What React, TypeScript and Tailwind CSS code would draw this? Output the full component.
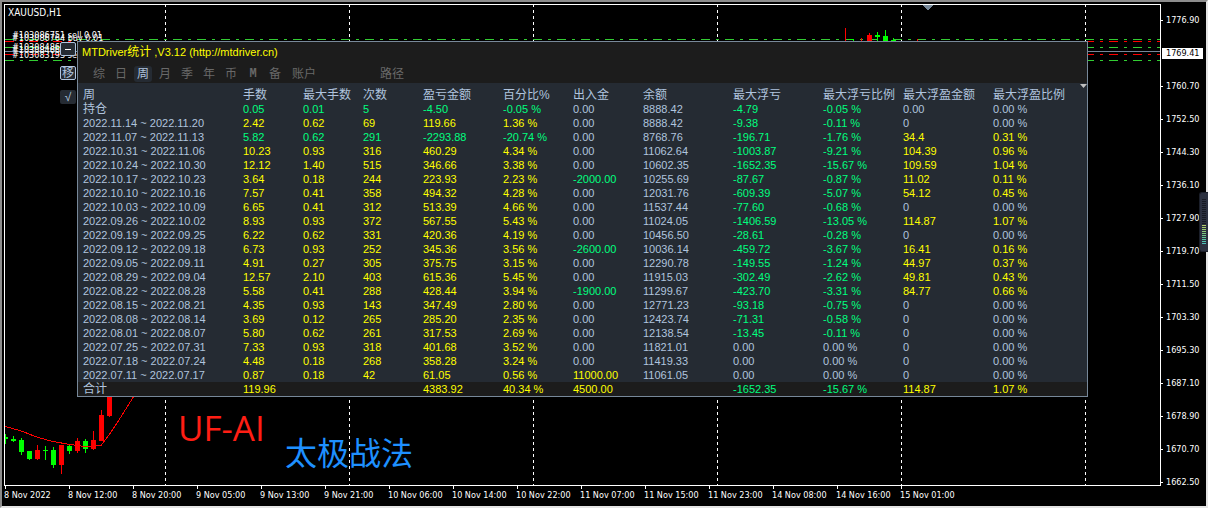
import { Fragment } from "react";

const TABS = ["综", "日", "周", "月", "季", "年", "币", "M", "备"];
const HEADERS = ["周", "手数", "最大手数", "次数", "盈亏金额", "百分比%", "出入金", "余额", "最大浮亏", "最大浮亏比例", "最大浮盈金额", "最大浮盈比例"];

const ROWS: string[][] = [
  ["持仓", "0.05", "0.01", "5", "-4.50", "-0.05", "0.00", "8888.42", "-4.79", "-0.05", "0.00", "0.00"],
  ["2022.11.14 ~ 2022.11.20", "2.42", "0.62", "69", "119.66", "1.36", "0.00", "8888.42", "-9.38", "-0.11", "0", "0.00"],
  ["2022.11.07 ~ 2022.11.13", "5.82", "0.62", "291", "-2293.88", "-20.74", "0.00", "8768.76", "-196.71", "-1.76", "34.4", "0.31"],
  ["2022.10.31 ~ 2022.11.06", "10.23", "0.93", "316", "460.29", "4.34", "0.00", "11062.64", "-1003.87", "-9.21", "104.39", "0.96"],
  ["2022.10.24 ~ 2022.10.30", "12.12", "1.40", "515", "346.66", "3.38", "0.00", "10602.35", "-1652.35", "-15.67", "109.59", "1.04"],
  ["2022.10.17 ~ 2022.10.23", "3.64", "0.18", "244", "223.93", "2.23", "-2000.00", "10255.69", "-87.67", "-0.87", "11.02", "0.11"],
  ["2022.10.10 ~ 2022.10.16", "7.57", "0.41", "358", "494.32", "4.28", "0.00", "12031.76", "-609.39", "-5.07", "54.12", "0.45"],
  ["2022.10.03 ~ 2022.10.09", "6.65", "0.41", "312", "513.39", "4.66", "0.00", "11537.44", "-77.60", "-0.68", "0", "0.00"],
  ["2022.09.26 ~ 2022.10.02", "8.93", "0.93", "372", "567.55", "5.43", "0.00", "11024.05", "-1406.59", "-13.05", "114.87", "1.07"],
  ["2022.09.19 ~ 2022.09.25", "6.22", "0.62", "331", "420.36", "4.19", "0.00", "10456.50", "-28.61", "-0.28", "0", "0.00"],
  ["2022.09.12 ~ 2022.09.18", "6.73", "0.93", "252", "345.36", "3.56", "-2600.00", "10036.14", "-459.72", "-3.67", "16.41", "0.16"],
  ["2022.09.05 ~ 2022.09.11", "4.91", "0.27", "305", "375.75", "3.15", "0.00", "12290.78", "-149.55", "-1.24", "44.97", "0.37"],
  ["2022.08.29 ~ 2022.09.04", "12.57", "2.10", "403", "615.36", "5.45", "0.00", "11915.03", "-302.49", "-2.62", "49.81", "0.43"],
  ["2022.08.22 ~ 2022.08.28", "5.58", "0.41", "288", "428.44", "3.94", "-1900.00", "11299.67", "-423.70", "-3.31", "84.77", "0.66"],
  ["2022.08.15 ~ 2022.08.21", "4.35", "0.93", "143", "347.49", "2.80", "0.00", "12771.23", "-93.18", "-0.75", "0", "0.00"],
  ["2022.08.08 ~ 2022.08.14", "3.69", "0.12", "265", "285.20", "2.35", "0.00", "12423.74", "-71.31", "-0.58", "0", "0.00"],
  ["2022.08.01 ~ 2022.08.07", "5.80", "0.62", "261", "317.53", "2.69", "0.00", "12138.54", "-13.45", "-0.11", "0", "0.00"],
  ["2022.07.25 ~ 2022.07.31", "7.33", "0.93", "318", "401.68", "3.52", "0.00", "11821.01", "0.00", "0.00", "0", "0.00"],
  ["2022.07.18 ~ 2022.07.24", "4.48", "0.18", "268", "358.28", "3.24", "0.00", "11419.33", "0.00", "0.00", "0", "0.00"],
  ["2022.07.11 ~ 2022.07.17", "0.87", "0.18", "42", "61.05", "0.56", "11000.00", "11061.05", "0.00", "0.00", "0", "0.00"],
];
const TOTAL = ["合计", "119.96", "", "", "4383.92", "40.34", "4500.00", "", "-1652.35", "-15.67", "114.87", "1.07"];

const PERCENT_COLUMNS = [5, 9, 11];

function signColor(value: string) {
  const n = parseFloat(value);
  if (!n) return "text-[#b0c4de]";
  return n < 0 ? "text-[#00ff7f]" : "text-[#ffff00]";
}

function cellColor(row: string[], col: number) {
  if (col === 0 || col === 7) return "text-[#b0c4de]";
  return signColor(col < 6 ? row[4] : row[col]);
}

function StatRow({ row, total = false }: { row: string[]; total?: boolean }) {
  const box = total ? "h-[14px] p-0 pt-px leading-[13px]" : "h-[14px] p-0 leading-[14px]";
  return (
    <tr>
      {row.map((value, i) =>
        i === 0 ? (
          <th key={i} scope="row" className={`${box} text-left font-normal text-[#b0c4de]`}>
            <span className={`block pl-[5px] ${value.length < 3 ? "text-xs" : ""} ${total ? "leading-[13px]" : "leading-[14px]"}`}>{value}</span>
          </th>
        ) : (
          <td key={i} className={`${box} ${cellColor(row, i)}`}>
            {value && PERCENT_COLUMNS.includes(i) ? `${value} %` : value}
          </td>
        ),
      )}
    </tr>
  );
}

const PRICES = ["1776.90", "1769.41", "1760.70", "1752.50", "1744.30", "1736.10", "1727.90", "1719.70", "1711.50", "1703.30", "1695.30", "1687.10", "1678.90", "1670.70", "1662.50"];
const TIMES = ["8 Nov 2022", "8 Nov 12:00", "8 Nov 20:00", "9 Nov 05:00", "9 Nov 13:00", "9 Nov 21:00", "10 Nov 06:00", "10 Nov 14:00", "10 Nov 22:00", "11 Nov 07:00", "11 Nov 15:00", "11 Nov 23:00", "14 Nov 08:00", "14 Nov 16:00", "15 Nov 01:00"];

const RED = "#ff0000";
const LIME = "#00ff00";

// x centre, body top, body bottom, wick top, wick bottom, colour
const CANDLES: [number, number, number, number, number, string][] = [
  [5, 437, 439, 434, 444, LIME],
  [13, 439, 441, 436, 442, LIME],
  [21, 440, 452, 438, 455, LIME],
  [29, 451, 459, 451, 460, LIME],
  [37, 450, 459, 445, 460, RED],
  [45, 450, 451, 446, 460, LIME],
  [53, 450, 465, 447, 468, LIME],
  [61, 445, 465, 445, 474, RED],
  [69, 446, 451, 444, 454, LIME],
  [77, 441, 451, 438, 453, RED],
  [85, 441, 449, 439, 453, LIME],
  [93, 440, 449, 431, 450, RED],
  [101, 415, 441, 410, 441, RED],
  [109, 396, 416, 396, 417, RED],
  [869, 35, 42, 33, 42, RED],
  [877, 35, 37, 32, 42, LIME],
  [885, 36, 42, 30, 42, LIME],
  [893, 40, 42, 38, 42, LIME],
];

const LEVELS: [number, string][] = [
  [39, "#32cd32"],
  [41, RED],
  [47, "#32cd32"],
  [54, RED],
  [60, "#32cd32"],
];

const ORDERS: [number, string][] = [
  [38, "#103086751 sell 0.01"],
  [41, "#103086764 buy 0.01"],
  [50, "#103084865"],
  [53, "#103084665"],
  [58, "#103083193 sell 0.01"],
];

function Chart() {
  return (
    <svg className="absolute inset-0 h-full w-full" shapeRendering="crispEdges" aria-hidden="true">
      <g transform="translate(-5 -5)">
        <defs>
          <pattern id="day" width="1" height="6" patternUnits="userSpaceOnUse" y="4">
            <rect width="1" height="3" fill="#ffffff" />
          </pattern>
        </defs>
        {[165, 349, 533, 717, 901, 1085].map((x) => (
          <rect key={x} x={x} y="4" width="1" height="110%" fill="url(#day)" />
        ))}
        {LEVELS.map(([y, color]) => (
          <line key={y} x1="5" x2="110%" y1={y + 0.5} y2={y + 0.5} stroke={color} strokeDasharray="9 6 3 6" />
        ))}
        <line x1="5" x2="110%" y1="51.5" y2="51.5" stroke="#778899" />
        {CANDLES.map(([x, top, bottom, high, low, color]) => (
          <Fragment key={x}>
            <rect x={x} y={high} width="1" height={low - high} fill={color} />
            <rect x={x - 2} y={top} width="5" height={bottom - top} fill={color} />
          </Fragment>
        ))}
        <path d="M845 28h1v14h-1zM861 38h1v4h-1zM917 39h1v3h-1z" fill={RED} />
        <path d="M849 39h5v3h-1v-2h-4z" fill={LIME} />
        <path d="M5 426.500 L20 430.500 L38 437.500 L53 441.500 L70 444.500 L85 446.500 L93 446.500 L101.500 445 L109 435 L119 420 L134 396" fill="none" stroke={RED} />
        <path d="M922 5h11l-5 5h-1z" fill="#778899" />
        <g className="font-['DejaVu_Sans_Condensed',sans-serif] text-[9px]" fill="#ffffff">
          {ORDERS.map(([y, label]) => (
            <text key={y} x="12" y={y}>{label}</text>
          ))}
        </g>
        <text x="178" y="441" fill="#ff1e14" className="font-['Open_Sans',sans-serif] text-[35px]">UF-AI</text>
        <text x="285" y="465" fill="#1e90ff" className="font-['Noto_Sans_CJK_SC',sans-serif] text-[32px]">太极战法</text>
      </g>
    </svg>
  );
}

const toolButton = "flex h-[14px] w-4 items-center justify-center rounded-[2px] bg-[#252b33] text-xs leading-none text-[#b0c4de]";

function StatsPanel() {
  return (
    <div className="relative flex items-start gap-px pt-9 pr-[72px] pl-[55px] font-['Liberation_Sans','Noto_Sans_CJK_SC',sans-serif]">
      <div className="flex flex-col gap-[10px] pt-px">
        <button aria-label="最小化" className={`${toolButton} border border-[#b0c4de]`}>
          <span className="h-px w-1.5 bg-white" />
        </button>
        <button className={`${toolButton} border border-[#b0c4de]`}>移</button>
        <button className={toolButton}>√</button>
      </div>
      <section className="relative min-w-0 flex-1 border border-[#778899] bg-[#252b33] text-[11px]">
        <header className="bg-[#1c1c1c] pb-px">
          <h1 className="h-5 pl-1 leading-5 text-[#ffff00]">
            MTDriver<span className="text-xs leading-5">统计</span> ,V3.12 (http://mtdriver.cn)
          </h1>
          <nav className="flex gap-1 pt-1 pl-3 text-xs leading-4 text-[#696969]">
            {TABS.map((tab) => (
              <button
                key={tab}
                className={`h-4 w-[18px] rounded-[3px] ${tab === "周" ? "bg-[#252b33] text-[#b0c4de]" : ""} ${tab === "M" ? "font-['Liberation_Mono',monospace] font-bold" : ""}`}
              >
                {tab}
              </button>
            ))}
            <button className="h-4 px-1">账户</button>
            <button className="ml-[52px] h-4 px-1">路径</button>
          </nav>
        </header>
        <table className="w-full table-fixed border-collapse whitespace-nowrap">
          <colgroup>
            <col className="w-[165px]" />
            <col className="w-[60px]" />
            <col className="w-[60px]" />
            <col className="w-[60px]" />
            <col className="w-20" />
            <col className="w-[70px]" />
            <col className="w-[70px]" />
            <col className="w-[90px]" />
            <col className="w-[90px]" />
            <col className="w-20" />
            <col className="w-[90px]" />
            <col />
          </colgroup>
          <thead>
            <tr>
              {HEADERS.map((label) => (
                <th key={label} scope="col" className="h-[19px] p-0 pt-[5px] text-left text-xs leading-[14px] font-normal text-[#b0c4de] first:pl-[5px]">
                  {label}
                </th>
              ))}
            </tr>
          </thead>
          <tbody>
            {ROWS.map((row) => (
              <StatRow key={row[0]} row={row} />
            ))}
          </tbody>
          <tfoot className="bg-[#1c1c1c]">
            <StatRow row={TOTAL} total />
          </tfoot>
        </table>
        <svg className="absolute top-[42px] right-0 h-1 w-[7px]" viewBox="0 0 7 4" aria-hidden="true">
          <path d="M0 0h7L3.500 4z" fill="#c0c0c0" />
        </svg>
      </section>
    </div>
  );
}

function PriceAxis() {
  return (
    <ul className="flex w-[45px] flex-col pb-[7px]">
      {PRICES.map((price) => (
        <li key={price} className="flex flex-1 items-center">
          {price === "1769.41" ? (
            <span className="ml-px flex h-[11px] w-[41px] items-center bg-white pl-1 text-black">{price}</span>
          ) : (
            <>
              <span className="mr-[3px] h-px w-0.5 bg-white" />
              {price}
            </>
          )}
        </li>
      ))}
    </ul>
  );
}

function TimeAxis() {
  return (
    <ul className="flex h-5 overflow-hidden">
      {TIMES.map((time) => (
        <li key={time} className="w-16 shrink-0">
          <span className="ml-px block h-[3px] w-px bg-white" />
          <span className="block leading-[12px] whitespace-nowrap">{time}</span>
        </li>
      ))}
    </ul>
  );
}

const METER = ["#b5cc6a", "#a8cc6a", "#9bcc70", "#8ccc78", "#7ecb80", "#70c98a", "#62c896", "#58c7a2", "#50c4ae", "#4cc0b8"];

function LevelMeter() {
  return (
    <div className="absolute top-[190px] -right-0.5 h-[60px] w-[9px] rounded-l-[3px] border border-r-0 border-[#1b1f2a] bg-[#2c3140]">
      <svg className="h-full w-full" viewBox="0 0 8 58" shapeRendering="crispEdges" aria-hidden="true">
        {Array.from({ length: 23 }, (_, i) => (
          <rect key={i} x="2" y={6 + i * 2} width="4" height="1" fill={i < 13 ? "#171a22" : METER[i - 13]} />
        ))}
      </svg>
    </div>
  );
}

export default function App() {
  return (
    <main className="relative flex min-h-screen border-2 border-t-[#8c8c8c] border-r-[#e4e4e4] border-b-[#e4e4e4] border-l-[#8c8c8c] bg-black pt-0.5 pl-0.5 font-['DejaVu_Sans_Condensed',sans-serif] text-[9px] leading-[11px] text-white">
      <div className="flex min-w-0 flex-1 flex-col">
        <div className="relative flex-1 overflow-hidden border border-white">
          <Chart />
          <h2 className="absolute top-0.5 left-[3px] text-[10px] leading-[12px]">XAUUSD,H1</h2>
          <StatsPanel />
        </div>
        <TimeAxis />
      </div>
      <PriceAxis />
      <LevelMeter />
    </main>
  );
}
